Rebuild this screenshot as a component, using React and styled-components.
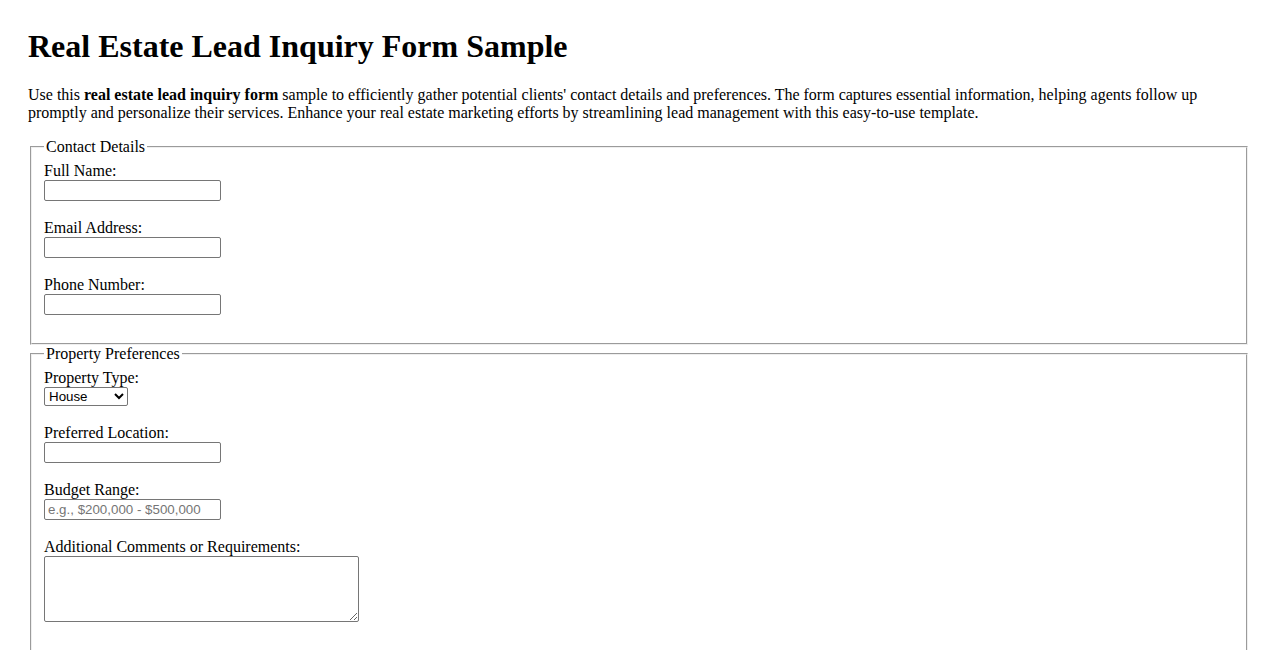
import styled, { createGlobalStyle } from 'styled-components'

const GlobalStyle = createGlobalStyle`
    body {
        margin: 0;
        background: #fff;
        color: #000;
        font-family: "Liberation Serif", "Times New Roman", serif;
        font-size: 16px;
    }
`

const fields = {
    contact: [
        { id: 'fullName', label: 'Full Name:', type: 'text' },
        { id: 'email', label: 'Email Address:', type: 'email' },
        { id: 'phone', label: 'Phone Number:', type: 'tel' },
    ],
}

function App() {
    return (
        <Page>
            <GlobalStyle />
            <Title>Real Estate Lead Inquiry Form Sample</Title>
            <Intro>
                Use this <strong>real estate lead inquiry form</strong> sample to efficiently gather potential clients' contact details and preferences. The form captures essential information, helping agents follow up promptly and personalize their services. Enhance your real estate marketing efforts by streamlining lead management with this easy-to-use template.
            </Intro>
            <form onSubmit={e => e.preventDefault()}>
                <Section>
                    <Legend>Contact Details</Legend>
                    {fields.contact.map(f =>
                        <Field key={f.id}>
                            <Label htmlFor={f.id}>{f.label}</Label>
                            <TextInput id={f.id} type={f.type} />
                        </Field>
                    )}
                </Section>
                <Section>
                    <Legend>Property Preferences</Legend>
                    <Field>
                        <Label htmlFor='propertyType'>Property Type:</Label>
                        <Select id='propertyType' defaultValue='house'>
                            <option value='house'>House</option>
                            <option value='apartment'>Apartment</option>
                            <option value='condo'>Condo</option>
                            <option value='land'>Land</option>
                        </Select>
                    </Field>
                    <Field>
                        <Label htmlFor='location'>Preferred Location:</Label>
                        <TextInput id='location' type='text' />
                    </Field>
                    <Field>
                        <Label htmlFor='budget'>Budget Range:</Label>
                        <TextInput id='budget' type='text' placeholder='e.g., $200,000 - $500,000' />
                    </Field>
                    <Field>
                        <Label htmlFor='comments'>Additional Comments or Requirements:</Label>
                        <TextArea id='comments' />
                    </Field>
                    <SubmitButton type='submit'>Submit Inquiry</SubmitButton>
                </Section>
            </form>
        </Page>
    )
}

export default App

const Page = styled.div`
    padding: 28px;
`

const Title = styled.h1`
    margin: 0 0 21px;
    font-size: 32px;
    line-height: 37px;
    font-weight: bold;
`

const Intro = styled.p`
    margin: 0 0 16px;
    line-height: 18px;

    strong {
        font-weight: bold;
    }
`

const Section = styled.fieldset`
    margin: 0 2px;
    padding: 6px 12px 10px;
`

const Legend = styled.legend`
    padding: 0 2px;
    line-height: 18px;
`

const Field = styled.div`
    display: flex;
    flex-direction: column;
    align-items: flex-start;
    margin-bottom: 18px;
`

const Label = styled.label`
    line-height: 18px;
`

const control = `
    box-sizing: border-box;
    font-family: "Liberation Sans", Arial, sans-serif;
    font-size: 13.33px;
    color: #000;
    background: #fff;
    border: 1px solid #767676;
    border-radius: 2px;
`

const TextInput = styled.input`
    ${control}
    width: 177px;
    height: 21px;
    padding: 1px 3px;

    &::placeholder {
        color: #757575;
    }
`

const Select = styled.select`
    ${control}
    width: 84px;
    height: 19px;
    padding: 0;
`

const TextArea = styled.textarea`
    ${control}
    width: 315px;
    height: 66px;
    padding: 2px;
    resize: both;
`

const SubmitButton = styled.button`
    margin-top: 28px;
    font-family: "Liberation Sans", Arial, sans-serif;
    font-size: 13.33px;
`
